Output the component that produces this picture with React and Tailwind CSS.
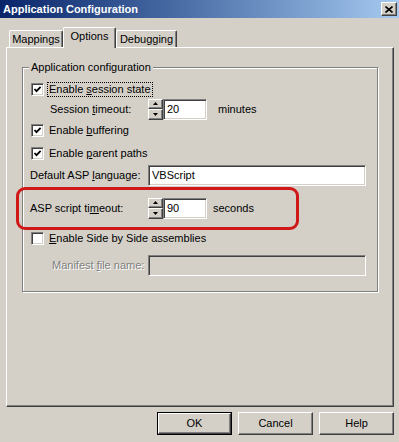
import React from 'react';

const sunken =
  'border border-t-[#808080] border-l-[#808080] border-b-white border-r-white shadow-[inset_1px_1px_0_#404040,inset_-1px_-1px_0_#d4d0c8]';
const raised =
  'border border-t-white border-l-white border-b-[#404040] border-r-[#404040] shadow-[inset_-1px_-1px_0_#808080]';

function Check({ checked }) {
  return (
    <span className={`w-[13px] h-[13px] shrink-0 bg-white flex items-center justify-center ${sunken}`}>
      {checked && (
        <svg width="9" height="9" viewBox="0 0 9 9">
          <path d="M1.5 4 L3.5 6.2 L7.6 1.8" fill="none" stroke="#000" strokeWidth="1.8" />
        </svg>
      )}
    </span>
  );
}

function Spinner() {
  return (
    <div className="flex flex-col w-[15px] h-[21px] shrink-0">
      {['up', 'down'].map((d) => (
        <div key={d} className={`flex-1 bg-[#d4d0c8] flex items-center justify-center ${raised}`}>
          <svg width="5" height="3" viewBox="0 0 5 3">
            {d === 'up' ? <path d="M2.5 0 L5 3 L0 3 Z" fill="#000" /> : <path d="M0 0 L5 0 L2.5 3 Z" fill="#000" />}
          </svg>
        </div>
      ))}
    </div>
  );
}

function TextBox({ value, width, disabled }) {
  return (
    <div
      className={`h-[21px] ${width} ${disabled ? 'bg-[#d4d0c8]' : 'bg-white'} ${sunken} flex items-center pl-[3px]`}
    >
      {value}
    </div>
  );
}

function CheckRow({ checked, children, focus, className = '' }) {
  return (
    <div className={`h-[14px] flex items-center pl-[8px] ${className}`}>
      <Check checked={checked} />
      <span
        className={`ml-[3px] px-[1px] leading-[13px] border border-dotted ${focus ? 'border-black' : 'border-transparent'}`}
      >
        {children}
      </span>
    </div>
  );
}

function Tab({ label, selected, className = '' }) {
  return (
    <div
      className={`flex items-center justify-center border-l border-t border-l-white border-t-white border-r border-r-[#404040] shadow-[inset_-1px_0_0_#808080] rounded-t-[2px] bg-[#d4d0c8] ${
        selected ? 'h-[21px] mb-[-1px] relative z-10 pb-[3px]' : 'h-[17px]'
      } ${className}`}
    >
      {label}
    </div>
  );
}

function Button({ label, isDefault }) {
  return (
    <div className={`w-[75px] h-[23px] ${isDefault ? 'border border-black' : ''}`}>
      <div className={`w-full h-full bg-[#d4d0c8] flex items-center justify-center ${raised}`}>{label}</div>
    </div>
  );
}

export default function App() {
  return (
    <div className="relative w-[399px] h-[442px] bg-[#d4d0c8] text-[11px] text-black font-['Liberation_Sans',Arial,sans-serif] overflow-hidden">
      {/* Title bar */}
      <div className="h-[18px] bg-gradient-to-r from-[#0a246a] to-[#a6caf0] flex items-center pl-[3px] pr-[2px]">
        <span className="flex-1 text-white font-bold leading-[13px]">Application Configuration</span>
        <div className={`w-[16px] h-[14px] bg-[#d4d0c8] flex items-center justify-center ${raised}`}>
          <svg width="8" height="7" viewBox="0 0 8 7">
            <path d="M0.5 0.5 L7.5 6.5 M7.5 0.5 L0.5 6.5" stroke="#000" strokeWidth="1.6" />
          </svg>
        </div>
      </div>

      {/* Tabs */}
      <div className="mt-[9px] h-[20px] flex items-end pl-[9px]">
        <Tab label="Mappings" className="w-[54px]" />
        <Tab label="Options" selected className="w-[53px]" />
        <Tab label="Debugging" className="w-[61px]" />
      </div>

      {/* Tab panel */}
      <div className="ml-[6px] w-[388px] h-[360px] border border-t-white border-l-white border-b-[#404040] border-r-[#404040] shadow-[inset_-1px_-1px_0_#808080]">
        <div className="relative mt-[19px] ml-[15px] w-[356px] h-[225px] border border-[#808080] shadow-[1px_1px_0_#fff,inset_1px_1px_0_#fff]">
          <span className="absolute top-[-7px] left-[6px] px-[2px] bg-[#d4d0c8] leading-[13px]">
            Application configuration
          </span>

          <div className="flex flex-col pt-[14px]">
            <CheckRow checked focus>
              Enable <u>s</u>ession state
            </CheckRow>

            <div className="mt-[2px] h-[22px] flex items-center pl-[27px]">
              <span className="w-[98px]">
                Session <u>t</u>imeout:
              </span>
              <Spinner />
              <TextBox value="20" width="w-[44px]" />
              <span className="ml-[11px]">minutes</span>
            </div>

            <CheckRow checked className="mt-[3px]">
              Enable <u>b</u>uffering
            </CheckRow>

            <CheckRow checked className="mt-[9px]">
              Enable <u>p</u>arent paths
            </CheckRow>

            <div className="mt-[4px] h-[22px] flex items-center pl-[7px]">
              <span className="w-[118px]">
                Default ASP <u>l</u>anguage:
              </span>
              <TextBox value="VBScript" width="w-[218px]" />
            </div>

            <div className="mt-[11px] h-[22px] flex items-center pl-[7px]">
              <span className="w-[118px]">
                ASP script ti<u>m</u>eout:
              </span>
              <Spinner />
              <TextBox value="90" width="w-[44px]" />
              <span className="ml-[6px]">seconds</span>
            </div>

            <CheckRow className="mt-[12px]">
              <u>E</u>nable Side by Side assemblies
            </CheckRow>

            <div className="mt-[9px] h-[22px] flex items-center pl-[29px]">
              <span className="w-[96px] text-[#808080] [text-shadow:1px_1px_0_#fff]">
                Manifest <u>f</u>ile name:
              </span>
              <TextBox value="" width="w-[218px]" disabled />
            </div>
          </div>
        </div>
      </div>

      {/* Buttons */}
      <div className="mt-[5px] flex justify-end gap-[6px] pr-[5px]">
        <Button label="OK" isDefault />
        <Button label="Cancel" />
        <Button label="Help" />
      </div>

      {/* Red annotation */}
      <div className="absolute left-[16px] top-[187px] w-[283px] h-[43px] border-[3px] border-[#d01818] rounded-[9px] pointer-events-none" />
    </div>
  );
}
